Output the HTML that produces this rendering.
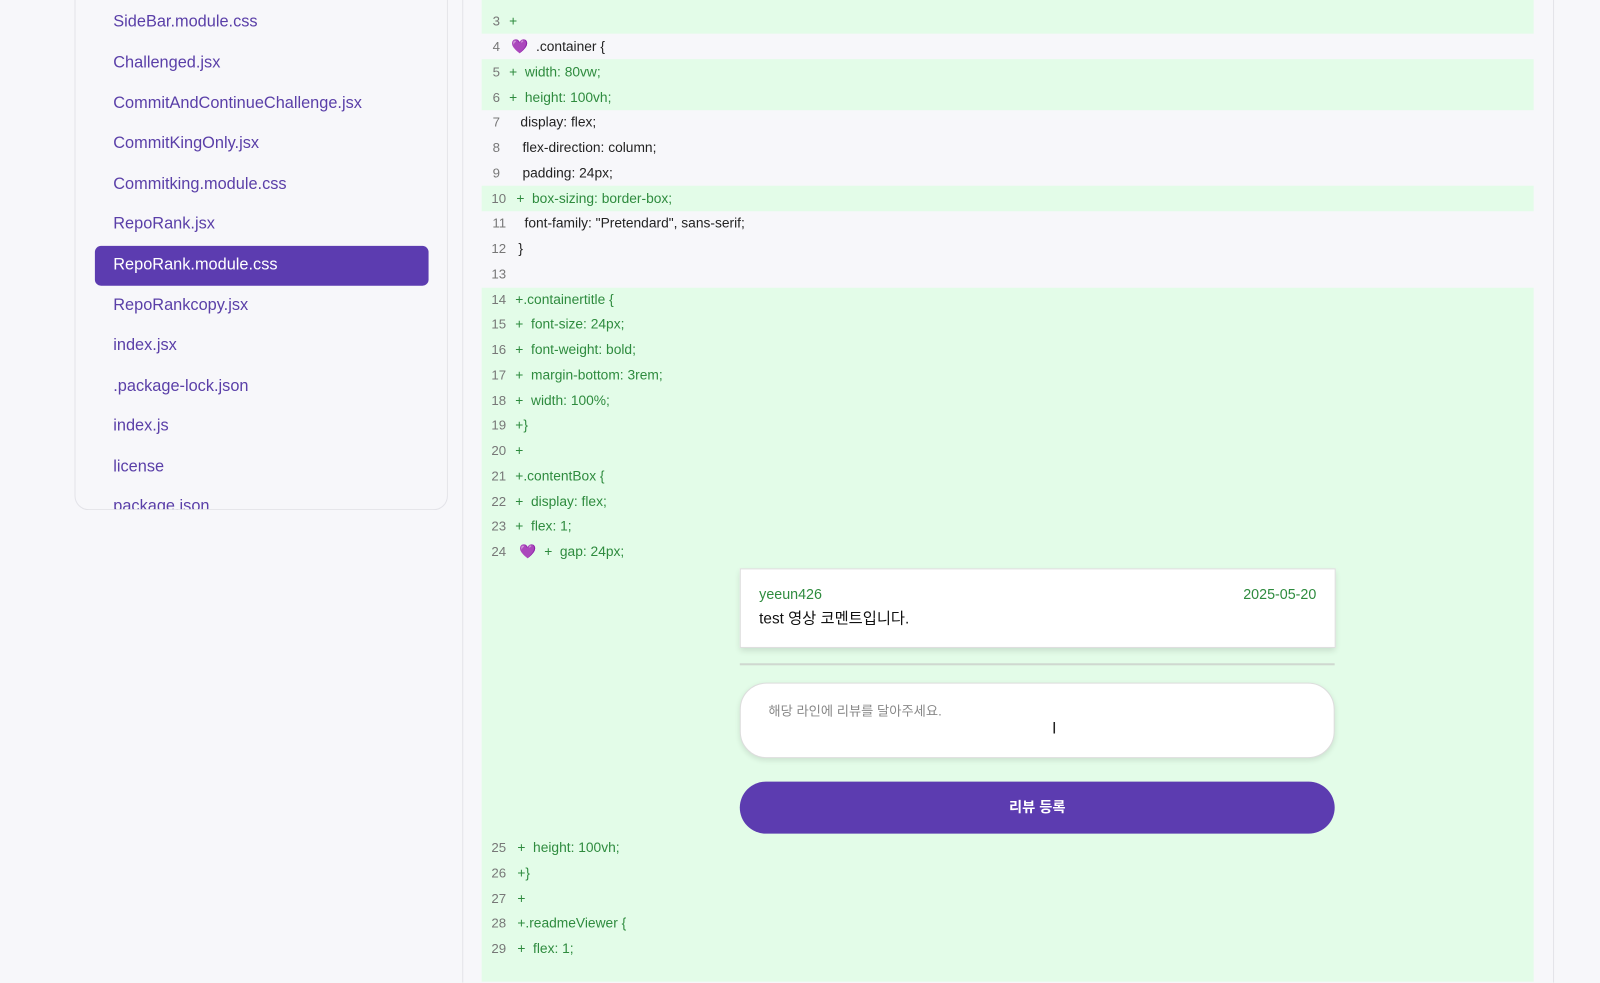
<!DOCTYPE html>
<html><head><meta charset="utf-8"><style>
body{margin:0;width:1600px;height:959px;background:#f7f7fa;overflow:hidden;font-family:"Liberation Sans","Noto Sans CJK KR",sans-serif}
#w{position:absolute;left:0;top:0;width:1568px;height:940px;transform:scale(1.0204);transform-origin:0 0}
.side{position:absolute;left:73px;top:-20px;width:364px;height:519px;border:1px solid #e3e3e8;border-top:none;border-radius:0 0 14px 14px;background:#f7f7fa;overflow:hidden}
.it{position:absolute;left:37px;font-size:16px;color:#5a3fa8;line-height:20px}
.act{position:absolute;left:19px;top:261px;width:327px;height:39px;background:#5c3cb0;border-radius:6px}
.code{position:absolute;left:453px;top:-2px;width:1068px;height:965px;border-left:1px solid #e3e3e8;border-right:1px solid #e3e3e8;background:#f7f7fa}
.row{position:absolute;left:472px;width:1031px;height:25px}
.g{background:#e3fce8}
.ln{position:absolute;width:18px;text-align:right;left:472px;font-size:13px;color:#777;line-height:25px}
.tx{position:absolute;font-size:13.5px;line-height:25px;color:#222;white-space:pre}
.tx.gr{color:#2e8b3e}
.card{position:absolute;left:725px;top:557px;width:582px;height:76px;background:#fff;border:1px solid #ddd;box-shadow:0 3px 6px rgba(0,0,0,.12)}
</style></head><body><div id="w">
<div class="side">
<div class="it" style="top:32px">SideBar.module.css</div>
<div class="it" style="top:72px">Challenged.jsx</div>
<div class="it" style="top:112px">CommitAndContinueChallenge.jsx</div>
<div class="it" style="top:151px">CommitKingOnly.jsx</div>
<div class="it" style="top:191px">Commitking.module.css</div>
<div class="it" style="top:230px">RepoRank.jsx</div>
<div class="act"></div>
<div class="it" style="top:270px;color:#fff">RepoRank.module.css</div>
<div class="it" style="top:310px">RepoRankcopy.jsx</div>
<div class="it" style="top:349px">index.jsx</div>
<div class="it" style="top:389px">.package-lock.json</div>
<div class="it" style="top:428px">index.js</div>
<div class="it" style="top:468px">license</div>
<div class="it" style="top:507px">package.json</div>
</div>
<div class="code"></div>
<div class="row g" style="top:-5px;height:38px"></div>
<div class="row g" style="top:58px;height:50px"></div>
<div class="row g" style="top:182px"></div>
<div class="row g" style="top:282px;height:680px"></div>

<div class="ln" style="top:8px">3</div><div class="tx gr" style="left:499px;top:8px">+</div>
<div class="ln" style="top:33px">4</div><div class="tx" style="left:501px;top:33px">💜  .container {</div>
<div class="ln" style="top:58px">5</div><div class="tx gr" style="left:499px;top:58px">+  width: 80vw;</div>
<div class="ln" style="top:83px">6</div><div class="tx gr" style="left:499px;top:83px">+  height: 100vh;</div>
<div class="ln" style="top:107px">7</div><div class="tx" style="left:510px;top:107px">display: flex;</div>
<div class="ln" style="top:132px">8</div><div class="tx" style="left:512px;top:132px">flex-direction: column;</div>
<div class="ln" style="top:157px">9</div><div class="tx" style="left:512px;top:157px">padding: 24px;</div>
<div class="ln" style="top:182px;width:24px">10</div><div class="tx gr" style="left:506px;top:182px">+  box-sizing: border-box;</div>
<div class="ln" style="top:206px;width:24px">11</div><div class="tx" style="left:514px;top:206px">font-family: "Pretendard", sans-serif;</div>
<div class="ln" style="top:231px;width:24px">12</div><div class="tx" style="left:508px;top:231px">}</div>
<div class="ln" style="top:256px;width:24px">13</div>
<div class="ln" style="top:281px;width:24px">14</div><div class="tx gr" style="left:505px;top:281px">+.containertitle {</div>
<div class="ln" style="top:305px;width:24px">15</div><div class="tx gr" style="left:505px;top:305px">+  font-size: 24px;</div>
<div class="ln" style="top:330px;width:24px">16</div><div class="tx gr" style="left:505px;top:330px">+  font-weight: bold;</div>
<div class="ln" style="top:355px;width:24px">17</div><div class="tx gr" style="left:505px;top:355px">+  margin-bottom: 3rem;</div>
<div class="ln" style="top:380px;width:24px">18</div><div class="tx gr" style="left:505px;top:380px">+  width: 100%;</div>
<div class="ln" style="top:404px;width:24px">19</div><div class="tx gr" style="left:505px;top:404px">+}</div>
<div class="ln" style="top:429px;width:24px">20</div><div class="tx gr" style="left:505px;top:429px">+</div>
<div class="ln" style="top:454px;width:24px">21</div><div class="tx gr" style="left:505px;top:454px">+.contentBox {</div>
<div class="ln" style="top:479px;width:24px">22</div><div class="tx gr" style="left:505px;top:479px">+  display: flex;</div>
<div class="ln" style="top:503px;width:24px">23</div><div class="tx gr" style="left:505px;top:503px">+  flex: 1;</div>
<div class="ln" style="top:528px;width:24px">24</div><div class="tx gr" style="left:509px;top:528px">💜  +  gap: 24px;</div>

<div class="card">
<div style="position:absolute;left:18px;top:16px;font-size:14px;color:#2e8b3e">yeeun426</div>
<div style="position:absolute;right:18px;top:16px;font-size:14px;color:#2e8b3e">2025-05-20</div>
<div style="position:absolute;left:18px;top:37px;font-size:15px;color:#111">test 영상 코멘트입니다.</div>
</div>
<div style="position:absolute;left:725px;top:650px;width:583px;height:2px;background:#cfd8d0"></div>
<div style="position:absolute;left:725px;top:669px;width:581px;height:72px;background:#fff;border:1px solid #ddd;border-radius:26px;box-shadow:0 2px 5px rgba(0,0,0,.1)">
<div style="position:absolute;left:27px;top:16px;font-size:13px;color:#888">해당 라인에 리뷰를 달아주세요.</div>
<div style="position:absolute;left:305px;top:36px;font-size:16px;color:#222">I</div>
</div>
<div style="position:absolute;left:725px;top:766px;width:583px;height:51px;background:#5c3cb0;border-radius:26px;color:#fff;font-size:14px;font-weight:bold;text-align:center;line-height:51px">리뷰 등록</div>

<div class="ln" style="top:818px;width:24px">25</div><div class="tx gr" style="left:507px;top:818px">+  height: 100vh;</div>
<div class="ln" style="top:843px;width:24px">26</div><div class="tx gr" style="left:507px;top:843px">+}</div>
<div class="ln" style="top:868px;width:24px">27</div><div class="tx gr" style="left:507px;top:868px">+</div>
<div class="ln" style="top:892px;width:24px">28</div><div class="tx gr" style="left:507px;top:892px">+.readmeViewer {</div>
<div class="ln" style="top:917px;width:24px">29</div><div class="tx gr" style="left:507px;top:917px">+  flex: 1;</div>
</div></body></html>
